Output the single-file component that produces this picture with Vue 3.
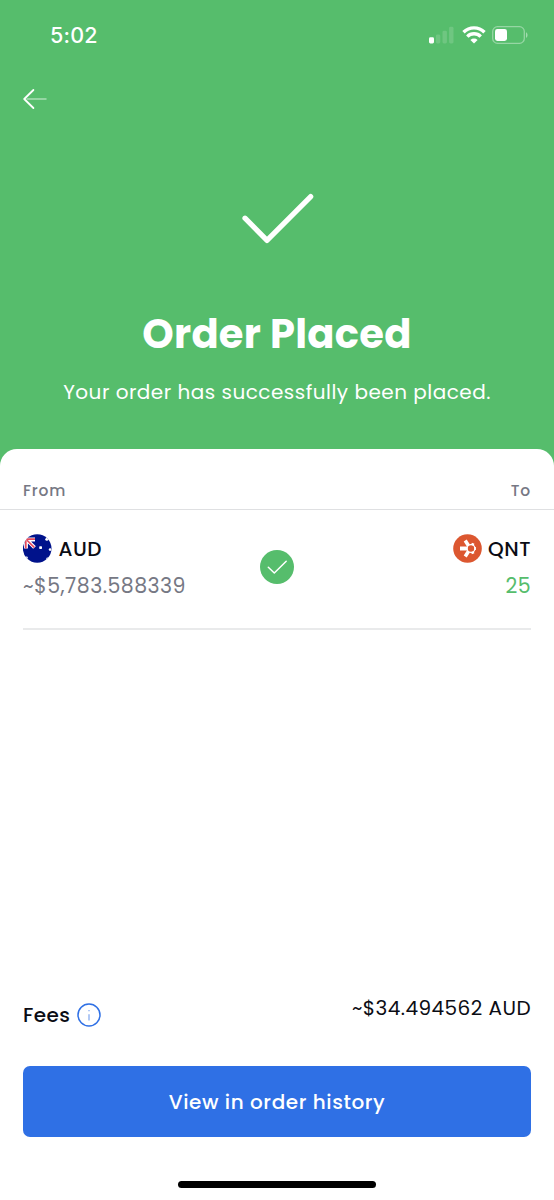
<template>
  <div class="order-page">
    <header class="hero">
      <div class="status-bar">
        <span class="status-time">5:02</span>
        <div class="status-icons">
          <svg class="icon-signal" width="26" height="18" viewBox="0 0 26 18">
            <rect x="0" y="11.2" width="5" height="6.3" rx="1.4" fill="#fff" />
            <rect x="6.9" y="8.6" width="4.4" height="8.9" rx="1.4" fill="#fff" opacity="0.15" />
            <rect x="13.5" y="4.7" width="4.4" height="12.8" rx="1.4" fill="#fff" opacity="0.15" />
            <rect x="20.1" y="0.8" width="4.4" height="16.7" rx="1.4" fill="#fff" opacity="0.15" />
          </svg>
          <svg class="icon-wifi" width="24" height="18" viewBox="0 0 24 18">
            <g fill="none" stroke="#fff" stroke-width="3.4">
              <path d="M1.5 6.2a15 15 0 0 1 21 0" />
              <path d="M5.3 10.6a9.4 9.4 0 0 1 13.4 0" />
            </g>
            <path d="M8.4 14a5.2 5.2 0 0 1 7.2 0L12 17.6z" fill="#fff" />
          </svg>
          <svg class="icon-battery" width="36" height="18" viewBox="0 0 36 18">
            <rect x="0.7" y="0.7" width="31.6" height="16.6" rx="4.8" fill="none" stroke="#fff" stroke-width="1.3" opacity="0.38" />
            <rect x="3" y="3" width="12" height="12" rx="2.4" fill="#fff" />
            <path d="M34 6.2c2 .8 2 4.8 0 5.6z" fill="#fff" opacity="0.45" />
          </svg>
        </div>
      </div>
      <button class="back-btn" aria-label="Back">
        <svg width="26" height="22" viewBox="0 0 26 22" fill="none" stroke="#fff" stroke-linecap="round" stroke-linejoin="round">
          <path d="M5 11h19" stroke-width="1.5" opacity="0.5" />
          <path d="M11.4 2L2.2 11l9.2 9" stroke-width="1.8" />
        </svg>
      </button>
      <svg class="hero-check" width="76" height="54" viewBox="0 0 76 54" fill="none" stroke="#fff" stroke-width="5.2" stroke-linecap="round" stroke-linejoin="round">
        <path d="M6 26.2L28 48.4 71.7 4.6" />
      </svg>
      <h1>Order Placed</h1>
      <p class="hero-text">Your order has successfully been placed.</p>
    </header>

    <main class="sheet">
      <div class="sheet-header">
        <span>From</span>
        <span>To</span>
      </div>
      <section class="trade">
        <div class="trade-side">
          <div class="coin">
            <svg class="coin-icon" width="29" height="29" viewBox="0 0 29 29">
              <defs>
                <clipPath id="flag-clip"><circle cx="14.2" cy="14.5" r="14.3" /></clipPath>
              </defs>
              <g clip-path="url(#flag-clip)">
                <rect width="29" height="29" fill="#00128b" />
                <path d="M0 5.5h12M3 3v11.5M3 5l8.5 8.5" stroke="#fff" stroke-width="3.8" />
                <path d="M0 5.2h12M2.8 3v11.5" stroke="#e5495b" stroke-width="1.7" />
                <path d="M4 6.2l7.2 7.2" stroke="#e5495b" stroke-width="1.6" />
                <rect x="16.2" y="12.2" width="2.8" height="2.8" rx="0.7" fill="#fff" />
                <circle cx="23.8" cy="5.3" r="1.5" fill="#fff" />
                <circle cx="27.1" cy="15.6" r="1.3" fill="#fff" />
                <circle cx="24.6" cy="24.7" r="1.3" fill="#fff" />
                <circle cx="3.6" cy="23.7" r="1.2" fill="#fff" />
              </g>
            </svg>
            <span>AUD</span>
          </div>
          <span class="amount">~$5,783.588339</span>
        </div>
        <svg class="trade-check" width="34" height="34" viewBox="0 0 34 34" fill="none">
          <circle cx="17" cy="17" r="17" fill="#56bd6c" />
          <path d="M8.3 17.2l6 5.8L26.2 11.2" stroke="#fff" stroke-width="1.5" stroke-linecap="round" stroke-linejoin="round" />
        </svg>
        <div class="trade-side right">
          <div class="coin">
            <svg class="coin-icon" width="29" height="29" viewBox="0 0 29 29">
              <circle cx="14.5" cy="14.5" r="14.3" fill="#dc5730" />
              <g fill="none" stroke="#fff">
                <path d="M7 14.5h7.4" stroke-width="4" />
                <path d="M12.2 6.6l3.2 4.8M12.2 22.4l3.2-4.8" stroke-width="3.6" />
                <circle cx="18" cy="14.5" r="3.9" stroke-width="1.3" />
                <path d="M20.2 9.2l-.9 2M22.9 14.5h-1.6M20.2 19.8l-.9-2" stroke-width="2.8" />
              </g>
            </svg>
            <span>QNT</span>
          </div>
          <span class="amount received">25</span>
        </div>
      </section>

      <footer class="summary">
        <div class="fees">
          <div class="fees-label">
            <span>Fees</span>
            <svg width="24" height="24" viewBox="0 0 24 24" fill="none" stroke="#2f70e5">
              <circle cx="12" cy="12" r="11" stroke-width="1.5" />
              <path d="M12 11.2v6.3M12 7v1.3" stroke-width="1.5" opacity="0.5" />
            </svg>
          </div>
          <span class="fees-value">~$34.494562 AUD</span>
        </div>
        <button class="history-btn">View in order history</button>
        <div class="home-indicator"></div>
      </footer>
    </main>
  </div>
</template>

<script setup>
</script>

<style>
body {
  margin: 0;
  background: #56bd6c;
}
</style>

<style scoped>
.order-page {
  height: 1200px;
  display: flex;
  flex-direction: column;
  background: #56bd6c;
  font-family: Poppins, Inter, 'Liberation Sans', sans-serif;
  color: #0b0c14;
  overflow: hidden;
}
.order-page * {
  box-sizing: border-box;
}
.hero {
  height: 449px;
  flex-shrink: 0;
  display: flex;
  flex-direction: column;
  align-items: center;
  color: #fff;
}
.status-bar {
  width: 100%;
  height: 70px;
  padding: 0 26px 0 50px;
  display: flex;
  align-items: center;
  justify-content: space-between;
}
.status-time {
  font-family: Inter, 'Liberation Sans', sans-serif;
  font-size: 21.5px;
  font-weight: 500;
  line-height: 30px;
  letter-spacing: 0.2px;
}
.status-icons {
  display: flex;
  gap: 6.5px;
}
.back-btn {
  align-self: flex-start;
  height: 22px;
  margin: 17.5px 0 0 22px;
  padding: 0;
  border: none;
  background: none;
  cursor: pointer;
}
.back-btn svg {
  display: block;
}
.hero-check {
  margin-top: 82.5px;
}
h1 {
  margin: 63px 0 0;
  font-size: 40px;
  line-height: 50px;
  font-weight: 700;
  letter-spacing: 0.3px;
  white-space: nowrap;
}
.hero-text {
  margin: 18px 0 0;
  font-size: 20px;
  line-height: 30px;
  letter-spacing: 0.48px;
  white-space: nowrap;
}
.sheet {
  flex: 1;
  display: flex;
  flex-direction: column;
  background: #fff;
  border-radius: 17px 17px 0 0;
}
.sheet-header {
  height: 61px;
  padding: 19px 23px 0;
  display: flex;
  justify-content: space-between;
  border-bottom: 1px solid #dfe0e2;
  color: #767884;
  font-size: 15.5px;
  line-height: 46px;
  font-weight: 500;
  letter-spacing: 0.8px;
}
.trade {
  height: 120px;
  margin: 0 23px;
  padding-top: 23px;
  display: flex;
  justify-content: space-between;
  border-bottom: 2px solid #e9eaeb;
}
.trade-side {
  flex: 1;
  display: flex;
  flex-direction: column;
  gap: 9px;
}
.trade-side.right {
  align-items: flex-end;
}
.trade-check {
  margin-top: 17px;
}
.coin {
  height: 31px;
  display: flex;
  align-items: center;
  gap: 6.5px;
  font-size: 20px;
  font-weight: 500;
  letter-spacing: 0.5px;
}
.amount {
  font-size: 20.5px;
  line-height: 26px;
  letter-spacing: 0.45px;
  color: #767884;
}
.amount.received {
  color: #56bd6c;
}
.summary {
  margin-top: auto;
  padding: 0 23px 12px;
  display: flex;
  flex-direction: column;
}
.fees {
  height: 43px;
  margin-bottom: 31px;
  display: flex;
  justify-content: space-between;
  align-items: flex-start;
  font-size: 20px;
}
.fees-label {
  display: flex;
  align-items: center;
  gap: 7px;
  padding-top: 11px;
  line-height: 24px;
  font-weight: 500;
  letter-spacing: 0.4px;
}
.fees-value {
  padding-top: 1px;
  line-height: 30px;
  letter-spacing: 0.45px;
}
.history-btn {
  height: 71px;
  border: none;
  border-radius: 7px;
  background: #2f70e5;
  color: #fff;
  font-family: inherit;
  font-size: 20px;
  font-weight: 500;
  letter-spacing: 0.58px;
  cursor: pointer;
}
.home-indicator {
  width: 198px;
  height: 7px;
  margin: 44px auto 0;
  border-radius: 4px;
  background: #000;
}
</style>
